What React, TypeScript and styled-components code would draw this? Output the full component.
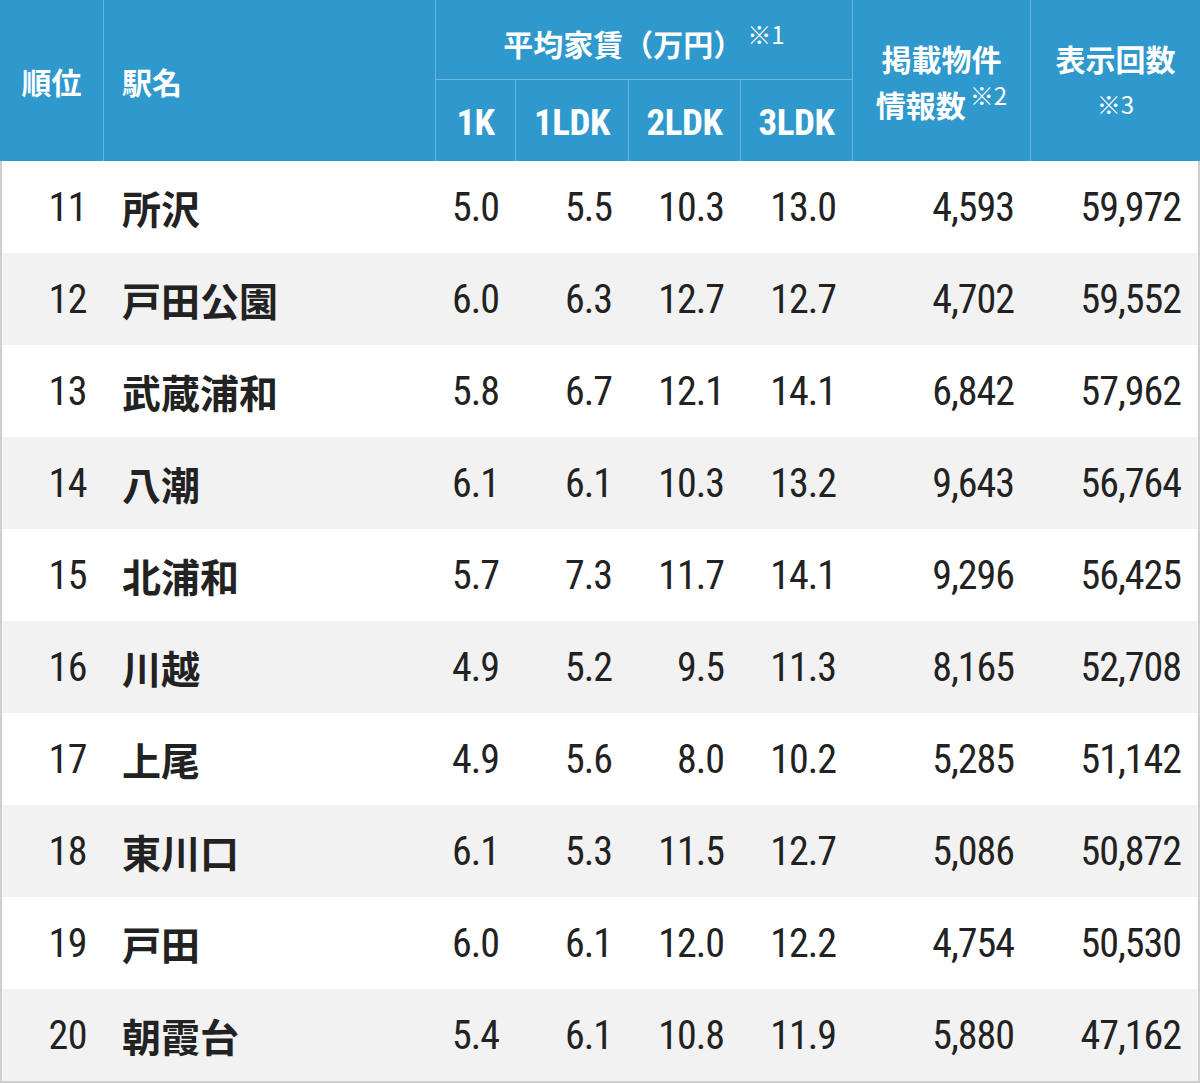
import { FC } from "react";
import styled, { createGlobalStyle } from "styled-components";

type Row = {
  rank: number;
  station: string;
  rents: string[];
  listings: string;
  views: string;
};

const rows: Row[] = [
  { rank: 11, station: "所沢", rents: ["5.0", "5.5", "10.3", "13.0"], listings: "4,593", views: "59,972" },
  { rank: 12, station: "戸田公園", rents: ["6.0", "6.3", "12.7", "12.7"], listings: "4,702", views: "59,552" },
  { rank: 13, station: "武蔵浦和", rents: ["5.8", "6.7", "12.1", "14.1"], listings: "6,842", views: "57,962" },
  { rank: 14, station: "八潮", rents: ["6.1", "6.1", "10.3", "13.2"], listings: "9,643", views: "56,764" },
  { rank: 15, station: "北浦和", rents: ["5.7", "7.3", "11.7", "14.1"], listings: "9,296", views: "56,425" },
  { rank: 16, station: "川越", rents: ["4.9", "5.2", "9.5", "11.3"], listings: "8,165", views: "52,708" },
  { rank: 17, station: "上尾", rents: ["4.9", "5.6", "8.0", "10.2"], listings: "5,285", views: "51,142" },
  { rank: 18, station: "東川口", rents: ["6.1", "5.3", "11.5", "12.7"], listings: "5,086", views: "50,872" },
  { rank: 19, station: "戸田", rents: ["6.0", "6.1", "12.0", "12.2"], listings: "4,754", views: "50,530" },
  { rank: 20, station: "朝霞台", rents: ["5.4", "6.1", "10.8", "11.9"], listings: "5,880", views: "47,162" }
];

const roomTypes = ["1K", "1LDK", "2LDK", "3LDK"];

const App: FC = () => (
  <>
    <GlobalStyle />
    <Table>
      <Head>
        <HeadCell $row="1 / 3" $col="1" $center>順位</HeadCell>
        <HeadCell $row="1 / 3" $col="2" $left>駅名</HeadCell>
        <HeadCell $row="1" $col="3 / 7" $center $divided>
          <span>
            平均家賃（万円）<Note $raised>※1</Note>
          </span>
        </HeadCell>
        {roomTypes.map((t, i) => (
          <SubHead key={t} style={{ gridColumn: i + 3 }}>
            {t}
          </SubHead>
        ))}
        <HeadCell $row="1 / 3" $col="7" $center>
          <Stack>
            <Line>掲載物件</Line>
            <Line>
              情報数<Note $raised>※2</Note>
            </Line>
          </Stack>
        </HeadCell>
        <HeadCell $row="1 / 3" $col="8" $center $last>
          <Stack>
            <Line>表示回数</Line>
            <Line>
              <Note>※3</Note>
            </Line>
          </Stack>
        </HeadCell>
      </Head>
      <Body>
        {rows.map((r, i) => (
          <BodyRow key={r.rank} $striped={i % 2 === 1}>
            <Rank>{r.rank}</Rank>
            <Station>{r.station}</Station>
            {r.rents.map((v, j) => (
              <Num key={j}>{v}</Num>
            ))}
            <Num>{r.listings}</Num>
            <Num>{r.views}</Num>
          </BodyRow>
        ))}
      </Body>
    </Table>
  </>
);

export default App;

const GlobalStyle = createGlobalStyle`
  html, body {
    margin: 0;
    padding: 0;
    background: #ffffff;
  }
  body {
    font-family: "Noto Sans CJK JP", "Noto Sans", sans-serif;
  }
`;

const numFont = `"Roboto Condensed", "Roboto", "Noto Sans CJK JP", sans-serif`;

const Table = styled.div`
  width: 1200px;
`;

const Head = styled.div`
  display: grid;
  grid-template-columns: 104px 332px 80px 113px 112px 112px 178px 169px;
  grid-template-rows: 80px 81px;
  background: #2f98cc;
  color: #ffffff;
`;

const HeadCell = styled.div<{
  $row: string;
  $col: string;
  $center?: boolean;
  $left?: boolean;
  $divided?: boolean;
  $last?: boolean;
}>`
  grid-row: ${(p) => p.$row};
  grid-column: ${(p) => p.$col};
  display: flex;
  align-items: center;
  justify-content: ${(p) => (p.$center ? "center" : "flex-start")};
  padding-left: ${(p) => (p.$left ? "18px" : "0")};
  padding-top: ${(p) => (p.$divided ? "6px" : "0")};
  border-right: ${(p) => (p.$last ? "none" : "1px solid #6db6dd")};
  border-bottom: ${(p) => (p.$divided ? "1px solid #6db6dd" : "none")};
  font-size: 30px;
  font-weight: 700;
  line-height: 46px;
  box-sizing: border-box;
  text-align: center;
`;

const SubHead = styled.div`
  grid-row: 2;
  display: flex;
  align-items: center;
  justify-content: center;
  padding-top: 4px;
  border-right: 1px solid #6db6dd;
  font-family: ${numFont};
  font-stretch: 75%;
  font-size: 37px;
  font-weight: 700;
  letter-spacing: -0.5px;
`;

const Stack = styled.div`
  display: flex;
  flex-direction: column;
  align-items: center;
`;

const Line = styled.div`
  height: 46px;
  line-height: 46px;
  white-space: nowrap;
`;

const Note = styled.span<{ $raised?: boolean }>`
  display: inline-block;
  font-family: "Noto Sans CJK JP", sans-serif;
  font-size: 24px;
  font-weight: 400;
  line-height: ${(p) => (p.$raised ? "1" : "46px")};
  vertical-align: top;
  position: relative;
  top: ${(p) => (p.$raised ? "2px" : "0")};
  margin-left: ${(p) => (p.$raised ? "4px" : "0")};
`;

const Body = styled.div`
  border: 2px solid #cfcfcf;
  border-top: none;
`;

const BodyRow = styled.div<{ $striped: boolean }>`
  display: grid;
  grid-template-columns: 102px 332px 80px 113px 112px 112px 178px 167px;
  height: 92px;
  align-items: center;
  background: ${(p) => (p.$striped ? "#f2f2f2" : "#ffffff")};
  color: #222222;
`;

const Rank = styled.div`
  font-family: ${numFont};
  font-stretch: 75%;
  font-size: 40px;
  font-weight: 400;
  letter-spacing: -0.5px;
  text-align: right;
  padding-right: 17px;
`;

const Station = styled.div`
  font-size: 39px;
  font-weight: 700;
  padding-left: 18px;
`;

const Num = styled.div`
  font-family: ${numFont};
  font-stretch: 75%;
  font-size: 40px;
  font-weight: 400;
  letter-spacing: -1px;
  text-align: right;
  padding-right: 17px;
`;
